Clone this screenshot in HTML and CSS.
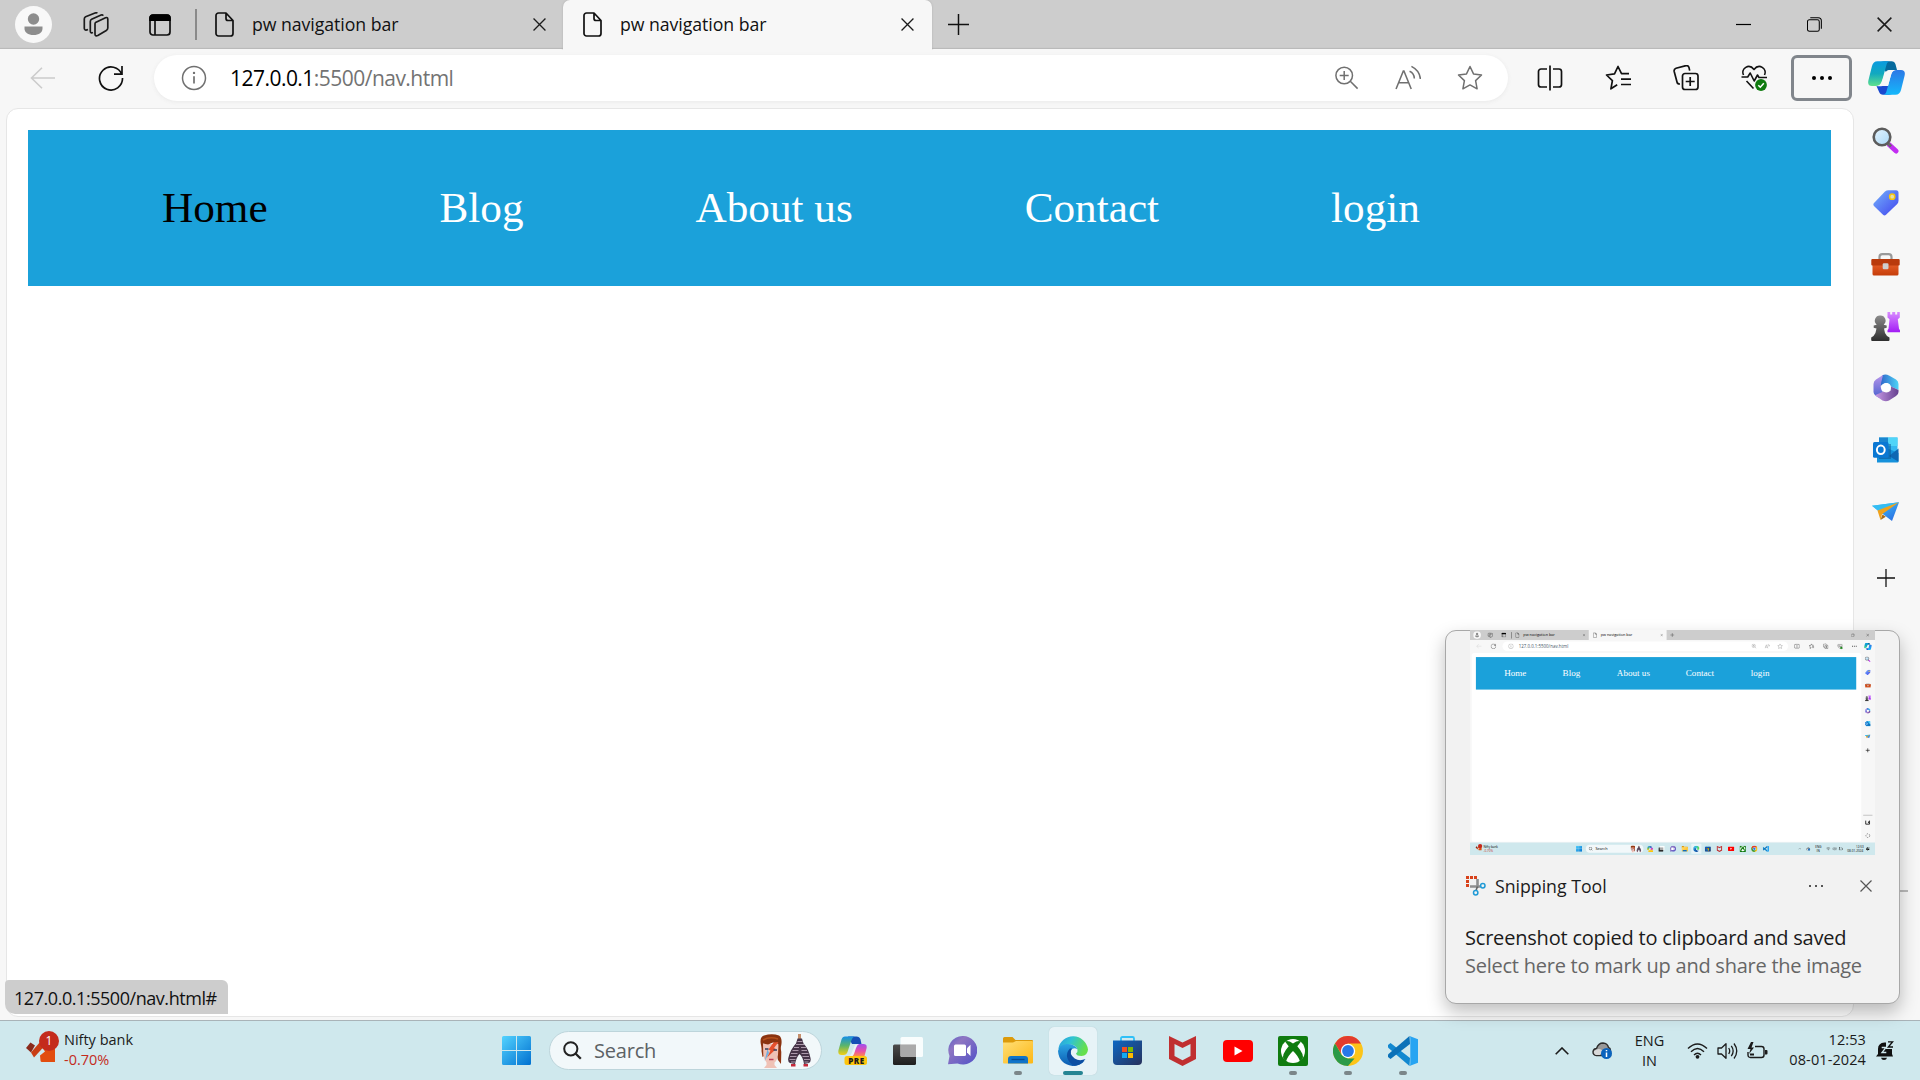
FILE: index.html
```html
<!DOCTYPE html>
<html lang="en">
<head>
<meta charset="utf-8">
<title>pw navigation bar</title>
<link rel="stylesheet" href="styles.css">
</head>
<body>
<svg class="sprite" width="0" height="0" aria-hidden="true">
  <defs>
    <linearGradient id="g-cop1" x1="0" y1="0" x2="0" y2="1"><stop offset="0" stop-color="#0a9be0"/><stop offset=".5" stop-color="#12a9bf"/><stop offset="1" stop-color="#5fe08d"/></linearGradient>
    <linearGradient id="g-cop2" x1="0" y1="0" x2="0" y2="1"><stop offset="0" stop-color="#2c78e6"/><stop offset="1" stop-color="#14b8fb"/></linearGradient>
    <linearGradient id="g-copA" x1="0" y1="0" x2="0" y2="1"><stop offset="0" stop-color="#148fe6"/><stop offset=".5" stop-color="#5cb56a"/><stop offset="1" stop-color="#f5d012"/></linearGradient>
    <linearGradient id="g-copB" x1="0" y1="0" x2="0" y2="1"><stop offset="0" stop-color="#a04fee"/><stop offset=".6" stop-color="#e94fa8"/><stop offset="1" stop-color="#ff8a4a"/></linearGradient>
    <linearGradient id="g-tag" x1="0" y1="0" x2="1" y2="1"><stop offset="0" stop-color="#74b3fb"/><stop offset="1" stop-color="#4143ee"/></linearGradient>
    <linearGradient id="g-pawn" x1="0" y1="0" x2="0" y2="1"><stop offset="0" stop-color="#8c8c8c"/><stop offset="1" stop-color="#2e2e2e"/></linearGradient>
    <linearGradient id="g-rook" x1="0" y1="0" x2="0" y2="1"><stop offset="0" stop-color="#d88cff"/><stop offset="1" stop-color="#a21bf5"/></linearGradient>
    <linearGradient id="g-box" x1="0" y1="0" x2="0" y2="1"><stop offset="0" stop-color="#e8602a"/><stop offset="1" stop-color="#c53d0a"/></linearGradient>
    <linearGradient id="g-m1" x1="0" y1="0" x2="1" y2="0"><stop offset="0" stop-color="#2f63c9"/><stop offset="1" stop-color="#4ed4f7"/></linearGradient>
    <linearGradient id="g-m2" x1="0" y1="0" x2="0" y2="1"><stop offset="0" stop-color="#b995ea"/><stop offset="1" stop-color="#4a62cf"/></linearGradient>
    <linearGradient id="g-m3" x1="0" y1="0" x2="1" y2="0"><stop offset="0" stop-color="#c79ae6"/><stop offset="1" stop-color="#66408f"/></linearGradient>
    <linearGradient id="g-win" x1="0" y1="0" x2="1" y2="1"><stop offset="0" stop-color="#54d3ff"/><stop offset="1" stop-color="#0070d0"/></linearGradient>
    <linearGradient id="g-tv" x1="0" y1="0" x2="0" y2="1"><stop offset="0" stop-color="#4b4b4b"/><stop offset="1" stop-color="#1e1e1e"/></linearGradient>
    <linearGradient id="g-chat" x1="0" y1="0" x2="1" y2="1"><stop offset="0" stop-color="#5b5fc7"/><stop offset=".3" stop-color="#8e75c2"/><stop offset="1" stop-color="#5050c8"/></linearGradient>
    <linearGradient id="g-fold" x1="0" y1="0" x2="1" y2="1"><stop offset="0" stop-color="#ffdf78"/><stop offset="1" stop-color="#fdb714"/></linearGradient>
    <linearGradient id="g-e1" x1="0" y1="0" x2="1" y2=".35"><stop offset="0" stop-color="#2a9be0"/><stop offset=".45" stop-color="#2fc3d3"/><stop offset="1" stop-color="#65e04c"/></linearGradient>
    <linearGradient id="g-e2" x1="0" y1="0" x2="0" y2="1"><stop offset="0" stop-color="#2ba5e4"/><stop offset="1" stop-color="#0b59b0"/></linearGradient>
    <linearGradient id="g-store" x1="0" y1="0" x2="1" y2="1"><stop offset="0" stop-color="#0d68c4"/><stop offset="1" stop-color="#27315c"/></linearGradient>
    <linearGradient id="g-plane" x1="0" y1="0" x2="1" y2="1"><stop offset="0" stop-color="#43d0fb"/><stop offset="1" stop-color="#2763e0"/></linearGradient>
    <linearGradient id="g-glass" x1="0" y1="0" x2="1" y2="1"><stop offset="0" stop-color="#e4f3fd"/><stop offset="1" stop-color="#a9d8f7"/></linearGradient>
  </defs>

  <symbol id="i-profile" viewBox="0 0 37 37"><circle cx="18.500" cy="18.500" r="18.500" fill="#f8f8f8"/><circle cx="18.500" cy="13" r="5.700" fill="#8d8d8d"/><path d="M9.500 20.500h18v2c0 4-3.500 6.500-9 6.500s-9-2.500-9-6.500z" fill="#8d8d8d"/></symbol>
  <symbol id="i-workspaces" viewBox="0 0 26 26"><g fill="none" stroke="#1b1b1b" stroke-width="1.700" stroke-linejoin="round"><path d="M12.500 10.600 22.500 5.700q2.200-.7 2.300 1.500V16q0 1.600-1.500 2.500l-8.500 5q-2.600 1.200-2.800-1.200V12q0-1 .5-1.400z"/><path d="M10 20.500q-2.500 1.200-2.700-1.200V9.500q0-1.600 1.300-2.300l9.500-4.200q1.600-.4 2 .8"/><path d="M5 17.500q-3.400 1.500-3.700-1.200V7q0-1.600 1.300-2.300L12 1q1.800-.5 2.200.4"/></g></symbol>
  <symbol id="i-tabs" viewBox="0 0 22 22"><path d="M4 1h14a3 3 0 0 1 3 3v14a3 3 0 0 1-3 3H4a3 3 0 0 1-3-3V4a3 3 0 0 1 3-3zM6 6v15" fill="none" stroke="#111" stroke-width="1.700"/><path d="M.2 7V4A4 4 0 0 1 4 .2h14A4 4 0 0 1 21.800 4v3z" fill="#000"/></symbol>
  <symbol id="i-file" viewBox="0 0 19 25"><path d="M3.500 1H11l7 7.500V21.500a2.500 2.500 0 0 1-2.500 2.500h-12A2.500 2.500 0 0 1 1 21.500V3.500A2.500 2.500 0 0 1 3.500 1zM11 1v5.500a2 2 0 0 0 2 2h5" fill="none" stroke="#111" stroke-width="1.700" stroke-linejoin="round"/></symbol>
  <symbol id="i-x" viewBox="0 0 12 12"><path d="m.5.5 11 11m0-11-11 11" fill="none" stroke="currentColor" stroke-width="1.200"/></symbol>
  <symbol id="i-plus" viewBox="0 0 20 20"><path d="M10 0v20M0 10h20" stroke="#111" stroke-width="1.400"/></symbol>
  <symbol id="i-min" viewBox="0 0 15 15"><path d="M0 7.500h15" stroke="#000" stroke-width="1.200"/></symbol>
  <symbol id="i-restore" viewBox="0 0 16 16"><path d="M2.500 3h8.600a2 2 0 0 1 2 2v8.200a2 2 0 0 1-2 2H2.500a2 2 0 0 1-2-2V5a2 2 0 0 1 2-2zM3.500.7h8.500q3.300 0 3.300 3.300v8.500" fill="none" stroke="#000" stroke-width="1.100"/></symbol>
  <symbol id="i-back" viewBox="0 0 26 22"><path d="M25 11H1M12 .8 1.500 11 12 21.200" fill="none" stroke="#ccc" stroke-width="1.600"/></symbol>
  <symbol id="i-reload" viewBox="0 0 26 26"><path d="M23.800 9.500A11.500 11.500 0 1 0 24.500 13M24 1v8.200h-8" fill="none" stroke="#111" stroke-width="1.700"/></symbol>
  <symbol id="i-info" viewBox="0 0 26 26"><circle cx="13" cy="13" r="11.500" fill="none" stroke="#707070" stroke-width="1.500"/><path d="M13 11.300v7.200" stroke="#707070" stroke-width="1.700"/><circle cx="13" cy="7.900" r="1.200" fill="#707070"/></symbol>
  <symbol id="i-zoomin" viewBox="0 0 24 24"><path d="M17.500 9.500a8.300 8.300 0 1 1-16.600 0 8.300 8.300 0 0 1 16.600 0zM15.300 15.300l7.300 7.300M9.200 5v9M4.700 9.500h9" fill="none" stroke="#707070" stroke-width="1.500"/></symbol>
  <symbol id="i-read" viewBox="0 0 25 24"><path d="m1 22.500 7-17.300h.6l7 17.300M3.500 16.500h9.700M14 5.500q4.500 2 4.600 7M15.800.8q8 4 8.600 12.200" fill="none" stroke="#707070" stroke-width="1.500"/></symbol>
  <symbol id="i-star" viewBox="0 0 26 26"><path d="m13 1.500 3.500 7.400 8 1.100-5.900 5.600 1.500 8.200-7.100-3.900-7.100 3.900 1.500-8.200L1.500 10l8-1.100z" fill="none" stroke="#707070" stroke-width="1.500" stroke-linejoin="round"/></symbol>
  <symbol id="i-split" viewBox="0 0 26 26"><path d="M10 4H4a2.500 2.500 0 0 0-2.500 2.500v13A2.500 2.500 0 0 0 4 22h6M16 4h6a2.500 2.500 0 0 1 2.500 2.500v13A2.500 2.500 0 0 1 22 22h-6M13 .5v25" fill="none" stroke="#111" stroke-width="1.700"/></symbol>
  <symbol id="i-favs" viewBox="0 0 26 26"><path d="M24 8.700H16.500L13 1.500 9.500 8.900l-8 1.100 5.900 5.600-1.500 8.200 6.300-4M16 14.200h10M16 19.500h10" fill="none" stroke="#111" stroke-width="1.700" stroke-linejoin="round"/></symbol>
  <symbol id="i-collect" viewBox="0 0 26 26"><path d="M12 8.500h10.500a2.500 2.500 0 0 1 2.500 2.500v11a2.500 2.500 0 0 1-2.500 2.500H12A2.500 2.500 0 0 1 9.500 22V11A2.500 2.500 0 0 1 12 8.500zM17.200 12v9M12.700 16.500h9M7 19q-2.600.2-3-2L1.200 6.500Q.7 4 3 3.200l10-2.600q2.300-.4 3 2l.7 3" fill="none" stroke="#111" stroke-width="1.700"/></symbol>
  <symbol id="i-health" viewBox="0 0 26 26"><path d="M2.500 10C-.5 3.500 8-2 13 4.500 18-2 26.500 3.500 23.500 10M.5 12h6.200l2.500-4 4 8 3.300-6 1.500 2.500H26M5.500 16l7 7.500" fill="none" stroke="#111" stroke-width="1.600" stroke-linejoin="round"/><circle cx="20" cy="20" r="5.900" fill="#0f7b0f"/><path d="m17.300 20.200 2 2 3.500-4" fill="none" stroke="#fff" stroke-width="1.500"/></symbol>
  <symbol id="i-copilot" viewBox="0 0 37 34"><path d="M12 2Q13 .3 16 .3h7.500q3 0 4 3L29 9h-7.500q-2 0-3 3z" fill="#066a9d"/><path d="M25 32q-1 1.700-4 1.700h-6q-3 0-4-3L8.500 25H14q3 0 4-3z" fill="#1a49cf"/><path d="M9.500.3H22q-2.700.2-3.500 3.500L14 20q-1.300 5-6 5H4q-5 0-3.500-6L4 5Q5.200.3 9.500.3z" fill="url(#g-cop1)"/><path d="M27.500 33.700H15q2.700-.2 3.500-3.500L23 14q1.300-5 6-5h4q5 0 3.500 6L33 29q-1.200 4.700-5.500 4.700z" fill="url(#g-cop2)"/><path d="M21.500 9H27q-3 .5-4 5l-3 11h-5.500q-3 .5-6 0 4 0 5.500-5l3-7.500q1-3.500 4.500-3.500z" fill="#f7f7f7"/></symbol>
  <symbol id="i-search3d" viewBox="0 0 27 27"><path d="m17.500 18 6.500 6" stroke="#c22ef2" stroke-width="5" stroke-linecap="round"/><path d="m15 15.500 4 4" stroke="#6a6a6a" stroke-width="3"/><circle cx="10" cy="10" r="8.300" fill="url(#g-glass)" stroke="#5c5c5c" stroke-width="2.600"/></symbol>
  <symbol id="i-tag" viewBox="0 0 26 26"><path d="M12 1.600Q13.500.2 15.500.2H23q2.500 0 2.500 2.500v8q0 2-1.500 3.500L13 24.800q-1.500 1.200-3 0L1 16q-1.300-1.500 0-3z" fill="url(#g-tag)"/><circle cx="19.200" cy="6.700" r="2.600" fill="#e3dfae" stroke="#f8c60e" stroke-width="1.500"/></symbol>
  <symbol id="i-toolbox" viewBox="0 0 29 23"><path d="M8.500 7V4q0-2.800 2.800-2.800h6.400q2.800 0 2.800 2.800v3" fill="none" stroke="#999" stroke-width="2.200"/><rect x="1.500" y="10" width="26" height="12.500" rx="1.500" fill="url(#g-box)"/><rect x=".3" y="6" width="28.400" height="6.500" rx="1" fill="#b93a0c"/><rect x="11.700" y="10.300" width="5.800" height="6" rx="1.200" fill="#cfcfcf"/></symbol>
  <symbol id="i-chess" viewBox="0 0 29 30"><path d="M16.500 1h2.700v2.400h2V1h3v2.400h2V1h2.600v5.500l-2 1.800 1.200 9.500 1 1.500v2H16.500v-2l1-1.500 1-9.500-2-1.800z" fill="url(#g-rook)"/><path d="M9.200 4.500a5.200 5.200 0 0 1 3.500 9.200l3 .8v2.300l-2.700.8q.3 4.400 3 7.400l2.500 1.500V29q0 1-1 1H1.200q-1 0-1-1v-2.500L2.500 25q2.600-3 3-7.400l-2.800-.8v-2.300l3-.8A5.200 5.200 0 0 1 9.200 4.500z" fill="url(#g-pawn)"/></symbol>
  <symbol id="i-m365" viewBox="0 0 26 28"><path d="M9 1.500Q12.500-.5 16 1.500l7 4Q25.500 7 25.500 10v6L18 12.500Q17 9 13 9L7 12z" fill="url(#g-m1)"/><path d="M10 1 7.700 10.500q-.2 5.500 2.300 7.500L6.500 24 3 22Q.5 20.500.5 18v-8Q.5 7 3 5.500z" fill="url(#g-m2)"/><path d="M2 21.200 10.500 17.500q3.500 2.200 7-.7.700-2 .5-4.300l7.500 3.500v2q0 2.800-2.500 4l-7 4.500Q13 28 9.500 26.500z" fill="url(#g-m3)"/><circle cx="13" cy="13.500" r="4.500" fill="#fff"/></symbol>
  <symbol id="i-outlook" viewBox="0 0 26 26"><path d="M6 .5h18.500V15H6z" fill="#35b8f1"/><path d="M6 .5h9V10H6z" fill="#1b85cf"/><path d="M15 .5h9.500V9H15z" fill="#50d4f8"/><path d="M4 12h12l9.500 4v8.500q0 1-1 1H4z" fill="#1691db"/><path d="m16 19 9.500-7.500v13.300z" fill="#0f67b3"/><rect x="6" y="7" width="12" height="15" fill="#0a4f8b" opacity=".5"/><rect x="0" y="5" width="15.500" height="15.800" rx="1.500" fill="#0b78d3"/><ellipse cx="7.800" cy="12.800" rx="3.900" ry="4.200" fill="none" stroke="#fff" stroke-width="2"/></symbol>
  <symbol id="i-plane" viewBox="0 0 27 20"><path d="M0 3.800 27 .3 20 19z" fill="url(#g-plane)"/><path d="M0 3.800 27 .3 7.500 10z" fill="#34bdf3"/><path d="M5.500 8.500 27 .3 10 12.300 8.500 18z" fill="#f1a21b"/><path d="m8.500 18 2-5.500 3.300 2.300z" fill="#a66a1a"/></symbol>

  <symbol id="i-stock" viewBox="0 0 34 28"><path d="m1 14 4.500-5.500 4.500 3L6 18.500z" fill="#8a2a1b"/><path d="m6 18.500 9-10.500 4.500 4L9 23.500z" fill="#c93d14"/><path d="M14 9h16v19H17q-1.500 0-1.500-1.500l-.5-5 5-4z" fill="#e24d0e"/></symbol>
  <symbol id="i-start" viewBox="0 0 29 29"><path d="M1.500 0H14v14H0V1.500Q0 0 1.500 0zM15 0h12.500Q29 0 29 1.500V14H15zM0 15h14v14H1.500Q0 29 0 27.500zM15 15h14v12.500q0 1.500-1.500 1.500H15z" fill="url(#g-win)"/></symbol>
  <symbol id="i-mag" viewBox="0 0 19 19"><circle cx="7.800" cy="7.800" r="6.600" fill="none" stroke="#222" stroke-width="2"/><path d="m12.500 12.500 5.300 5.300" stroke="#222" stroke-width="2.300"/></symbol>
  <symbol id="i-face" viewBox="0 0 22 34"><path d="M2 10h18l1.300 8-.3 12-3-4-1-4H4l-1.500 1-1-6z" fill="#8f3512"/><path d="M3 10h15.500l-.5 11q-1 6-3.500 7.500V31l2.500 3H4l2.500-3v-2.500Q4 26 3.300 21z" fill="#efc2b6"/><path d="M.8 10Q-.5 3 4 1.500 12-1 19 1.500q3.500 2.500 2.300 9.500L20 16l-1.500-6-5.500-1.500-5 2-5-1-1 6z" fill="#8a3310"/><path d="M3 6q7-4 15-1" stroke="#b5501c" stroke-width="1.500" fill="none"/><path d="m13.500 8.500 5-.5-4.500 6 2 1-9 8.500 3.500-7-2-1z" fill="#e6502d"/><path d="m7.500 15-2.800 12 4.300-8z" fill="#71aee0"/><path d="M5 15h3.500M13.500 16H17" stroke="#35405e" stroke-width="1.500"/><path d="M9 25.500h4.500" stroke="#c0415a" stroke-width="1.500"/></symbol>
  <symbol id="i-pants" viewBox="0 0 23 33"><path d="M10 0h3v6h-3z" fill="#c58f6c"/><path d="M9.500 4.500h4.500l1.500 5q5 5 7 14.500.8 4-1.500 5l-5 1q-1-7-4.500-10-3 3-4.500 10l-5-1Q-.5 28 .3 24 2.500 15 8 9.500z" fill="#453347"/><path d="M9.500 7.500h5M8 10.500h8M6 13.500h5m2 0h5M4.500 16.500h6m3 0h5.500M3 19.500h6.500m4 0h7M2 22.500h6.500m6 0H21M1.500 25.500h6m8.500 0h6M3 28h4m9.500 0h4" stroke="#c5b3c4" stroke-width=".8"/><path d="M3 30h4.500v2.500H3zM15.500 30H20v2.500h-4.500z" fill="#c5283a"/></symbol>
  <symbol id="i-copcolor" viewBox="0 0 29 29"><path d="M10 .5h8.500q3 0 4 3L23.500 8H14z" fill="#164fb5"/><path d="M7 .5h9.500q-2 .5-3 3.500L9.500 16q-1 3-4 3h-2Q-.5 19 .5 14L3.500 3.500Q4.500.5 7 .5z" fill="url(#g-copA)"/><path d="M21 20H12q2-.5 3-3.500L17 11q1-3 4-3h4.500q4 0 3 4.500L26.500 20z" fill="url(#g-copB)"/><path d="m17 9-4 9.500q-1 2-4 2h4q2 0 3-2.500l2-6q1-3 3-4-3 0-4 1z" fill="#eaf4f6"/><rect x="6.500" y="20" width="22.500" height="9" rx="2.500" fill="#fdc50c"/></symbol>
  <symbol id="i-taskview" viewBox="0 0 30 28"><rect x="0" y="7.500" width="23" height="20.500" rx="1.500" fill="url(#g-tv)"/><rect x="7.500" y="0" width="22.500" height="20" rx="1.500" fill="#fff" opacity=".88"/><path d="M7.500 7.500H23V20H9q-1.500 0-1.500-1.500z" fill="#aaa"/></symbol>
  <symbol id="i-chat" viewBox="0 0 29 29"><path d="M14.500 0a14.300 14.300 0 1 1-5 27.500L0 28.300 1.500 20A14.300 14.300 0 0 1 14.500 0z" fill="url(#g-chat)"/><rect x="6" y="8.500" width="12" height="11.500" rx="1.500" fill="#fff"/><path d="m19 12.300 3.500-3.500V20L19 16.500z" fill="#fff"/></symbol>
  <symbol id="i-folder" viewBox="0 0 30 27"><path d="M1.500 0h8l3 3H29q1 0 1 1v8H0V1.500Q0 0 1.500 0z" fill="#dc9a0b"/><path d="M0 5.500h10L13 4h16q1 0 1 1v20.500q0 1-1 1H1q-1 0-1-1z" fill="url(#g-fold)"/><path d="M5 26.500V22q0-3 3-3h14q3 0 3 3v4.500z" fill="#1074c9"/><path d="M8.500 22.500h13" stroke="#0a4b91" stroke-width="1.300"/></symbol>
  <symbol id="i-edge" viewBox="0 0 30 30"><path d="M.3 13A15 15 0 0 1 30 13.500q-.5 6.200-6.500 6.500-5 0-5.500-2.500 2-1.500 1.500-4-1.500-4.500-7-5Q4 9 .3 13z" fill="url(#g-e1)"/><path d="M0 15Q1 8.500 9 8q8.500 0 10.500 5.500-2.500-2-5.500-.5-5 3-2.500 9 3 6 11 4.500l4-1.500Q22 30 14.500 30 1 28 0 15z" fill="url(#g-e2)"/><path d="M12 12.500Q7.500 17 9.500 22.500q2 5 7 7.300 7-.8 11-6.800-6 2.500-10.800-.5Q10.500 18 14 12.500z" fill="#0c4ea2"/></symbol>
  <symbol id="i-store" viewBox="0 0 29 29"><path d="M8 6V2.500Q8 1 9.500 1h10Q21 1 21 2.500V6" fill="none" stroke="#2fc0f7" stroke-width="1.800"/><path d="M0 4.500h29V25q0 4-4 4H4q-4 0-4-4z" fill="url(#g-store)"/><path d="M9 11h5v5H9z" fill="#f25022"/><path d="M15 11h5v5h-5z" fill="#7fba00"/><path d="M9 17h5v5H9z" fill="#13a9f1"/><path d="M15 17h5v5h-5z" fill="#ffb900"/></symbol>
  <symbol id="i-mcafee" viewBox="0 0 27 30"><path d="m0 0 13.500 6.500L27 0v23l-13.500 7L0 23zm5.500 8v12l8 4.200 8-4.200V8l-8 4z" fill="#c02f30" fill-rule="evenodd"/></symbol>
  <symbol id="i-youtube" viewBox="0 0 30 22"><rect width="30" height="22" rx="4" fill="#f00"/><path d="m11.500 6.500 8 4.500-8 4.500z" fill="#fff"/></symbol>
  <symbol id="i-xbox" viewBox="0 0 30 30"><rect width="30" height="30" rx="2" fill="#107c10"/><circle cx="15" cy="15" r="12" fill="#fff"/><path d="M7 5.500q3-1.500 8 2 5-3.500 8-2l-3.700 4.700q7.200 8.300 5.200 12.800L22 25.500q-2-6-7-10.500-5 4.500-7 10.500L5.500 23q-2-4.500 5.200-12.800z" fill="#107c10"/></symbol>
  <symbol id="i-chrome" viewBox="0 0 30 30"><circle cx="15" cy="15" r="15" fill="#fcc419"/><path d="M2 7.500A15 15 0 0 1 28 7.500H15L9 19z" fill="#e33b2e"/><path d="M2 7.500 8.500 18.700 15 22.500h6.500L15 30A15 15 0 0 1 2 7.500z" fill="#2b9a48"/><circle cx="15" cy="15" r="7.200" fill="#fff"/><circle cx="15" cy="15" r="5.900" fill="#2878e8"/></symbol>
  <symbol id="i-vscode" viewBox="0 0 30 30"><path d="m0 9 2.500-2 19.500 15-.5 8L.5 12q-1-1.500-.5-3z" fill="#1288d0"/><path d="m0 21 2.500 2L22 8l-.5-8L.5 18q-1 1.500-.5 3z" fill="#0b71b8"/><path d="M21.500 0 30 3.300v23.400L21.500 30q1-1 .8-3V3q.2-2-.8-3z" fill="#27a4f2"/></symbol>

  <symbol id="i-chev" viewBox="0 0 14 8"><path d="M.7 7.300 7 1l6.300 6.300" fill="none" stroke="#1b1b1b" stroke-width="1.600"/></symbol>
  <symbol id="i-cloud" viewBox="0 0 20 17"><path d="M4.500 13.500Q.8 13 1 9.700q.5-3 3.500-3.200Q6.500 1 11 1q4.500.3 5.500 4.500 2 .5 2 3v5z" fill="#989898" stroke="#2d2d2d" stroke-width="1.400"/><path d="M2 9q5-4 9 0l-3 4H4q-2.500-1-2-4z" fill="#d8d8d8"/><circle cx="14.500" cy="11.500" r="5.500" fill="#0a63bd"/><path d="M14.500 10.500V15M14.500 8v1.300" stroke="#fff" stroke-width="1.500"/></symbol>
  <symbol id="i-wifi" viewBox="0 0 21 16"><path d="M1 5.500q9.500-9 19 0M4 8.800q6.500-6.500 13 0M7 12q3.500-3.500 7 0" fill="none" stroke="#1b1b1b" stroke-width="1.400"/><circle cx="10.500" cy="13.800" r="1.900" fill="#1b1b1b"/></symbol>
  <symbol id="i-vol" viewBox="0 0 21 18"><path d="M1 6h3.500L9 1.700v14.600L4.500 12H1zM11.700 6q2 3 0 6M14.300 3.800q3.700 5.200 0 10.400M17 1.500q5.500 7.500 0 15" fill="none" stroke="#1b1b1b" stroke-width="1.300" stroke-linejoin="round"/></symbol>
  <symbol id="i-batt" viewBox="0 0 21 17"><path d="M8 4.500h6.500Q17 4.500 17 7v6q0 2.500-2.500 2.500H3.500Q1 15.500 1 13v-3" fill="none" stroke="#1b1b1b" stroke-width="1.400"/><path d="M18 8h1.500q1 0 1 1v2.500q0 1-1 1H18z" fill="#1b1b1b"/><path d="M4 0 .5 7h3L2 12l5-6.500H4.500L6.500 0zM3 13.500v-2h4v2z" fill="#1b1b1b"/></symbol>
  <symbol id="i-bell" viewBox="0 0 18 20"><path d="M2 8q0-6 6.500-6.500H10V8h6v5l1 2.500H0L2 13zM5 16.700h6q-.5 2.300-3 2.300t-3-2.300z" fill="#111"/><path d="M12 .8h4.700L12.300 6H17" fill="none" stroke="#cfe8ed" stroke-width="2.600"/><path d="M12 .9h4.500L12.300 6H17" fill="none" stroke="#111" stroke-width="1.400"/><path d="M5.700 6.500H10l-4 5h4.300" fill="none" stroke="#cfe8ed" stroke-width="1.300"/></symbol>
  <symbol id="i-snip" viewBox="0 0 20 20"><path d="M0 0h3v3H0zM4 0h3v3H4zM8 0h3v3H8zM0 4h3v3H0zM0 8h3v3H0z" fill="#d8421a"/><path d="M11.500 3v9M4 10.500h10" stroke="#8f8f8f" stroke-width="2.600"/><path d="M11.500 10.500 10 14.500M14 10.500h1" stroke="#666" stroke-width="1.600"/><circle cx="16.800" cy="9.800" r="2.200" fill="none" stroke="#1f9ad6" stroke-width="1.500"/><circle cx="9.700" cy="16.800" r="2.200" fill="none" stroke="#1f9ad6" stroke-width="1.500"/></symbol>
</svg>

<div class="browser">
  <header class="tabstrip">
    <svg class="profile"><use href="#i-profile"/></svg>
    <svg class="workspaces"><use href="#i-workspaces"/></svg>
    <svg class="tabs-menu"><use href="#i-tabs"/></svg>
    <span class="divider"></span>
    <div class="tab">
      <svg class="file"><use href="#i-file"/></svg>
      <span class="tab-title">pw navigation bar</span>
      <svg class="tab-close"><use href="#i-x"/></svg>
    </div>
    <div class="tab tab-active">
      <svg class="file"><use href="#i-file"/></svg>
      <span class="tab-title">pw navigation bar</span>
      <svg class="tab-close"><use href="#i-x"/></svg>
    </div>
    <svg class="new-tab"><use href="#i-plus"/></svg>
    <div class="controls">
      <span><svg class="ctl"><use href="#i-min"/></svg></span>
      <span><svg class="ctl"><use href="#i-restore"/></svg></span>
      <span><svg class="ctl"><use href="#i-x"/></svg></span>
    </div>
  </header>

  <div class="toolbar">
    <svg class="back"><use href="#i-back"/></svg>
    <svg class="tool reload"><use href="#i-reload"/></svg>
    <div class="address">
      <svg class="tool"><use href="#i-info"/></svg>
      <span class="url"><b>127.0.0.1</b>:5500/nav.html</span>
      <div class="address-actions">
        <svg class="zoomin"><use href="#i-zoomin"/></svg>
        <svg class="tool"><use href="#i-read"/></svg>
        <svg class="tool"><use href="#i-star"/></svg>
      </div>
    </div>
    <div class="tools">
      <svg class="tool"><use href="#i-split"/></svg>
      <svg class="tool"><use href="#i-favs"/></svg>
      <svg class="tool"><use href="#i-collect"/></svg>
      <svg class="tool"><use href="#i-health"/></svg>
    </div>
    <div class="more"><i></i><i></i><i></i></div>
    <svg class="copilot"><use href="#i-copilot"/></svg>
  </div>

  <div class="content">
    <main class="page">
      <nav class="navbar">
        <a class="current">Home</a>
        <a>Blog</a>
        <a>About us</a>
        <a>Contact</a>
        <a>login</a>
      </nav>
      <div class="status">127.0.0.1:5500/nav.html#</div>
    </main>
    <aside class="sidebar">
      <span class="side"><svg width="27" height="27"><use href="#i-search3d"/></svg></span>
      <span class="side"><svg width="26" height="26"><use href="#i-tag"/></svg></span>
      <span class="side"><svg width="29" height="23"><use href="#i-toolbox"/></svg></span>
      <span class="side"><svg width="29" height="30"><use href="#i-chess"/></svg></span>
      <span class="side"><svg width="26" height="28"><use href="#i-m365"/></svg></span>
      <span class="side"><svg width="26" height="26"><use href="#i-outlook"/></svg></span>
      <span class="side"><svg width="27" height="20"><use href="#i-plane"/></svg></span>
      <span class="side side-add"><svg width="18" height="18"><use href="#i-plus"/></svg></span>
      <span class="side-line"></span>
    </aside>
  </div>
</div>

<footer class="taskbar">
  <div class="widget">
    <div class="widget-icon"><svg width="34" height="28"><use href="#i-stock"/></svg><span class="badge">1</span></div>
    <div class="widget-text"><span>Nifty bank</span><span class="down">-0.70%</span></div>
  </div>
  <div class="apps">
    <span class="app start"><svg width="29" height="29"><use href="#i-start"/></svg></span>
    <div class="search">
      <svg width="19" height="19"><use href="#i-mag"/></svg>
      <span>Search</span>
      <svg class="face" width="22" height="34"><use href="#i-face"/></svg>
      <svg width="23" height="33"><use href="#i-pants"/></svg>
    </div>
    <span class="app"><svg width="29" height="29"><use href="#i-copcolor"/></svg><span class="pre">PRE</span></span>
    <span class="app"><svg width="30" height="28"><use href="#i-taskview"/></svg></span>
    <span class="app"><svg width="29" height="29"><use href="#i-chat"/></svg></span>
    <span class="app running"><svg width="30" height="27"><use href="#i-folder"/></svg></span>
    <span class="app running focused"><svg width="30" height="30"><use href="#i-edge"/></svg></span>
    <span class="app"><svg width="29" height="29"><use href="#i-store"/></svg></span>
    <span class="app"><svg width="27" height="30"><use href="#i-mcafee"/></svg></span>
    <span class="app"><svg width="30" height="22"><use href="#i-youtube"/></svg></span>
    <span class="app running"><svg width="30" height="30"><use href="#i-xbox"/></svg></span>
    <span class="app running"><svg width="30" height="30"><use href="#i-chrome"/></svg></span>
    <span class="app running"><svg width="30" height="30"><use href="#i-vscode"/></svg></span>
  </div>
  <div class="tray">
    <svg width="14" height="8"><use href="#i-chev"/></svg>
    <svg class="cloud" width="20" height="17"><use href="#i-cloud"/></svg>
    <div class="lang"><span>ENG</span><span>IN</span></div>
    <svg width="21" height="16"><use href="#i-wifi"/></svg>
    <svg class="vol" width="21" height="18"><use href="#i-vol"/></svg>
    <svg class="batt" width="21" height="17"><use href="#i-batt"/></svg>
    <div class="clock"><span>12:53</span><span>08-01-2024</span></div>
    <svg class="bell" width="18" height="20"><use href="#i-bell"/></svg>
  </div>
</footer>

<section class="toast">
  <svg class="preview" viewBox="0 0 1920 1080" preserveAspectRatio="none">
    <rect width="1920" height="1080" fill="#f7f7f7"/>
    <rect width="1920" height="48" fill="#cdcdcd"/>
    <rect x="563" width="369" height="50" fill="#f7f7f7"/>
    <rect x="154" y="55" width="1354" height="46" rx="23" fill="#fff"/>
    <rect x="8" y="110" width="1847" height="906" rx="12" fill="#fff"/>
    <use href="#i-profile" x="15" y="6" width="37" height="37"/>
    <use href="#i-workspaces" x="83" y="12" width="26" height="26"/>
    <use href="#i-tabs" x="149" y="13" width="22" height="22"/>
    <rect x="195" y="10" width="3" height="31" fill="#666"/>
    <use href="#i-file" x="215" y="12" width="19" height="25"/>
    <use href="#i-file" x="583" y="12" width="19" height="25"/>
    <text x="253" y="31" class="mini-ui">pw navigation bar</text>
    <text x="620" y="31" class="mini-ui">pw navigation bar</text>
    <use href="#i-x" x="534" y="18" width="13" height="13"/>
    <use href="#i-x" x="902" y="18" width="13" height="13"/>
    <use href="#i-plus" x="949" y="14" width="20" height="20"/>
    <use href="#i-restore" x="1807" y="17" width="16" height="16"/>
    <use href="#i-x" x="1878" y="17" width="15" height="15"/>
    <use href="#i-back" x="30" y="67" width="26" height="22"/>
    <use href="#i-reload" x="98" y="65" width="26" height="26"/>
    <use href="#i-info" x="181" y="65" width="26" height="26"/>
    <text x="231" y="86" class="mini-url">127.0.0.1:5500/nav.html</text>
    <use href="#i-zoomin" x="1335" y="66" width="24" height="24"/>
    <use href="#i-read" x="1397" y="66" width="25" height="24"/>
    <use href="#i-star" x="1457" y="65" width="26" height="26"/>
    <use href="#i-split" x="1537" y="65" width="26" height="26"/>
    <use href="#i-favs" x="1606" y="65" width="26" height="26"/>
    <use href="#i-collect" x="1673" y="65" width="26" height="26"/>
    <use href="#i-health" x="1741" y="66" width="26" height="26"/>
    <path d="M1811 78h4m5 0h4m5 0h4" stroke="#111" stroke-width="4"/>
    <use href="#i-copilot" x="1868" y="62" width="37" height="34"/>
    <rect x="28" y="130" width="1803" height="156" fill="#1ba1da"/>
    <g class="mini-nav"><text x="162" y="222">Home</text><text x="439" y="222">Blog</text><text x="696" y="222">About us</text><text x="1023" y="222">Contact</text><text x="1331" y="222">login</text></g>
    <use href="#i-search3d" x="1872" y="127" width="27" height="27"/>
    <use href="#i-tag" x="1873" y="191" width="26" height="26"/>
    <use href="#i-toolbox" x="1872" y="254" width="29" height="23"/>
    <use href="#i-chess" x="1872" y="312" width="29" height="30"/>
    <use href="#i-m365" x="1873" y="374" width="26" height="28"/>
    <use href="#i-outlook" x="1873" y="437" width="26" height="26"/>
    <use href="#i-plane" x="1872" y="501" width="27" height="20"/>
    <path d="M1885.500 568v19m-9.500-9.500h19" stroke="#111" stroke-width="3"/>
    <rect x="1864" y="887" width="44" height="4" fill="#bbb"/>
    <path d="M1876 915v17h18v-17m-5 4v8" fill="none" stroke="#111" stroke-width="4"/>
    <circle cx="1886" cy="987" r="9" fill="none" stroke="#555" stroke-width="3" stroke-dasharray="6 5"/>
    <rect y="1020" width="1920" height="60" fill="#cfe8ed"/>
    <use href="#i-stock" x="25" y="1030" width="34" height="28"/>
    <circle cx="48" cy="1037" r="10" fill="#c4281c"/>
    <text x="64" y="1046" class="mini-task">Nifty bank</text>
    <text x="64" y="1065" class="mini-task mini-down">-0.70%</text>
    <use href="#i-start" x="502" y="1036" width="29" height="29"/>
    <rect x="549" y="1031" width="273" height="38" rx="19" fill="#f2f8fa"/>
    <use href="#i-mag" x="563" y="1041" width="19" height="19"/>
    <text x="595" y="1057" class="mini-ui">Search</text>
    <use href="#i-face" x="761" y="1034" width="22" height="34"/>
    <use href="#i-pants" x="789" y="1034" width="23" height="33"/>
    <use href="#i-copcolor" x="839" y="1037" width="29" height="29"/>
    <use href="#i-taskview" x="893" y="1036" width="30" height="28"/>
    <use href="#i-chat" x="948" y="1036" width="29" height="29"/>
    <use href="#i-folder" x="1003" y="1037" width="30" height="27"/>
    <rect x="1049" y="1026" width="48" height="48" rx="4" fill="#e8f4f8"/>
    <use href="#i-edge" x="1058" y="1035" width="30" height="30"/>
    <use href="#i-store" x="1113" y="1036" width="29" height="29"/>
    <use href="#i-mcafee" x="1169" y="1035" width="27" height="30"/>
    <use href="#i-youtube" x="1223" y="1039" width="30" height="22"/>
    <use href="#i-xbox" x="1278" y="1035" width="30" height="30"/>
    <use href="#i-chrome" x="1333" y="1035" width="30" height="30"/>
    <use href="#i-vscode" x="1388" y="1035" width="30" height="30"/>
    <use href="#i-chev" x="1556" y="1046" width="14" height="8"/>
    <use href="#i-cloud" x="1593" y="1043" width="20" height="17"/>
    <text x="1637" y="1046" class="mini-task">ENG</text>
    <text x="1643" y="1066" class="mini-task">IN</text>
    <use href="#i-wifi" x="1688" y="1042" width="21" height="16"/>
    <use href="#i-vol" x="1718" y="1041" width="21" height="18"/>
    <use href="#i-batt" x="1748" y="1041" width="21" height="17"/>
    <text x="1830" y="1046" class="mini-task">12:53</text>
    <text x="1789" y="1066" class="mini-task">08-01-2024</text>
    <use href="#i-bell" x="1877" y="1041" width="18" height="20"/>
  </svg>
  <div class="toast-head">
    <svg width="20" height="20"><use href="#i-snip"/></svg>
    <span class="toast-app">Snipping Tool</span>
    <span class="dots"><i></i><i></i><i></i></span>
    <svg class="toast-close" width="12" height="12"><use href="#i-x"/></svg>
  </div>
  <p class="toast-title">Screenshot copied to clipboard and saved</p>
  <p class="toast-body">Select here to mark up and share the image</p>
</section>
</body>
</html>
```
FILE: styles.css
```css
* { box-sizing: border-box; }
body {
  margin: 0;
  width: 1920px;
  height: 1080px;
  overflow: hidden;
  display: flex;
  flex-direction: column;
  background: #f7f7f7;
  color: #1b1b1b;
  font-family: "Open Sans", "Noto Sans", sans-serif;
}
svg { display: block; flex: none; }
.sprite { position: absolute; }

.browser { height: 1020px; display: flex; flex-direction: column; }

/* Tab strip */
.tabstrip {
  height: 49px;
  display: flex;
  align-items: center;
  padding-left: 15px;
  background: #cdcdcd;
  box-shadow: inset 0 -2px 1px -1px #b9b9b9;
}
.profile { width: 37px; height: 37px; }
.workspaces { width: 26px; height: 26px; margin-left: 31px; }
.tabs-menu { width: 22px; height: 22px; margin-left: 40px; }
.divider { width: 2px; height: 31px; margin-left: 24px; background: #8a8a8a; }
.tab { width: 366px; height: 49px; display: flex; align-items: center; padding: 0 17px 0 18px; }
.tab-active { width: 369px; height: 50px; margin-top: 1px; padding: 0 18px 1px 20px; background: #f7f7f7; border-radius: 7px 7px 0 0; box-shadow: 0 0 2px #aaa; clip-path: inset(0 -3px 0 -3px); }
.file { width: 19px; height: 25px; }
.tab-title { margin-left: 18px; padding-bottom: 1px; font-size: 17.700px; letter-spacing: -.05px; white-space: nowrap; color: #111; }
.tab-close { width: 13px; height: 13px; margin-left: auto; }
.new-tab { width: 21px; height: 21px; margin-left: 16px; }
.controls { display: flex; margin-left: auto; }
.controls span { width: 70.5px; display: flex; justify-content: center; }
.ctl { width: 15px; height: 15px; }

/* Toolbar */
.toolbar { height: 59px; display: flex; align-items: center; padding: 0 15px 1px 30px; background: #f7f7f7; }
.tool { width: 26px; height: 26px; }
.back { width: 26px; height: 22px; }
.reload { margin-left: 42px; }
.address {
  width: 1354px;
  height: 46px;
  margin-left: 30px;
  padding: 0 25px 0 27px;
  display: flex;
  align-items: center;
  border-radius: 23px;
  background: #fff;
  box-shadow: 0 1px 4px #e9e9e9;
}
.url { margin-left: 23px; font-size: 21px; letter-spacing: -.53px; color: #737373; }
.url b { font-weight: 400; color: #000; }
.address-actions { margin-left: auto; display: flex; align-items: center; gap: 36px; }
.zoomin { width: 24px; height: 24px; }
.tools { margin-left: 29px; display: flex; gap: 42px; }
.more {
  width: 61px;
  height: 46px;
  margin-left: 24px;
  border: 3px solid #81868c;
  border-radius: 6px;
  display: flex;
  align-items: center;
  justify-content: center;
  gap: 4px;
}
.more i { width: 4px; height: 4px; border-radius: 50%; background: #000; }
.copilot { width: 37px; height: 34px; margin-left: auto; }

/* Content row: page and sidebar */
.content { height: 912px; display: flex; padding-left: 6px; }
.page {
  position: relative;
  width: 1848px;
  height: 909px;
  padding: 21px 22px 0 21px;
  border: 1px solid #e6e6e6;
  border-radius: 12px;
  background: #fff;
}
.navbar {
  height: 156px;
  padding: 0 0 2px 134px;
  display: flex;
  align-items: center;
  gap: 172px;
  background: #1ba1da;
  color: #fff;
  font: 43.2px "Liberation Serif", serif;
}
.navbar .current { color: #000; }
.status {
  position: absolute;
  left: -2px;
  bottom: 2px;
  width: 223px;
  height: 34px;
  padding-left: 9px;
  border-radius: 4px 6px 0 10px;
  background: #cdcdcd;
  font-size: 18px;
  letter-spacing: -.45px;
  line-height: 36px;
  color: #111;
}
.sidebar { width: 66px; display: flex; flex-direction: column; align-items: center; padding: 1px 3px 0 0; }
.side { height: 62px; display: flex; align-items: center; justify-content: center; }
.side:nth-child(2) { padding-top: 2px; }
.side-add { height: 70px; }
.side-line { width: 44px; height: 2px; margin-top: 277px; background: #b9b9b9; }

/* Taskbar */
.taskbar { height: 60px; display: flex; align-items: center; border-top: 1px solid #a9b3b8; background: #cfe8ed; }
.widget { width: 480px; display: flex; padding-left: 25px; }
.widget-icon { position: relative; margin-top: 2px; }
.badge { position: absolute; left: 14px; top: -3px; width: 20px; height: 20px; border-radius: 50%; background: #c42b1c; color: #fff; font-size: 12px; line-height: 20px; text-align: center; }
.widget-text { margin: -2px 0 0 5px; display: flex; flex-direction: column; font-size: 14.500px; line-height: 20px; }
.down { color: #c42b1c; }
.apps { display: flex; align-items: center; height: 59px; }
.app { position: relative; width: 55px; height: 48px; display: flex; align-items: center; justify-content: center; }
.start { width: 73px; }
.pre { position: absolute; left: 20px; top: 29px; width: 23px; height: 10px; font-size: 8px; font-weight: 800; line-height: 9px; letter-spacing: .6px; text-align: center; }
.search {
  width: 273px;
  height: 39px;
  margin: 0 3px 0 -4px;
  padding: 0 10px 0 13px;
  display: flex;
  align-items: center;
  border: 1px solid #bdd5db;
  border-radius: 20px;
  background: #f2f8fa;
  font-size: 20px;
  letter-spacing: -.2px;
  color: #5c6265;
}
.search span { margin-left: 12px; }
.face { margin: 0 6px 0 auto; }
.running::after { content: ""; position: absolute; left: 24px; bottom: 0; width: 8px; height: 4px; border-radius: 2px; background: #7b8689; }
.focused { width: 48px; margin: 0 3px 0 4px; border-radius: 5px; background: #e7f3f7; box-shadow: 0 0 1px #a9bfc6; }
.focused::after { left: 14px; width: 20px; background: #268593; }
.tray { margin-left: auto; display: flex; align-items: center; padding-right: 26px; font-size: 14.500px; line-height: 20px; }
.cloud { margin-left: 23px; }
.lang { width: 75px; display: flex; flex-direction: column; align-items: center; }
.vol { margin-left: 9px; }
.batt { margin-left: 9px; }
.clock { width: 98px; margin-top: -2px; display: flex; flex-direction: column; align-items: flex-end; letter-spacing: .1px; }
.bell { margin-left: 10px; }

/* Notification */
.toast {
  position: absolute;
  left: 1445px;
  top: 630px;
  width: 455px;
  height: 374px;
  border: 1px solid #a8a8a8;
  border-radius: 11px;
  background: #f2f2f2;
  box-shadow: 0 8px 18px rgba(0, 0, 0, .25);
}
.preview { width: 405px; height: 225px; margin: -1px auto 0; }
.toast-head { display: flex; align-items: center; height: 22px; margin-top: 20px; padding: 0 27px 0 20px; }
.toast-app { margin-left: 9px; font-size: 17.700px; }
.dots { display: flex; gap: 4px; margin-left: auto; }
.dots i { width: 2px; height: 2px; background: #555; }
.toast-close { margin-left: 37px; color: #555; }
.toast-title, .toast-body { margin: 0; padding-left: 19px; font-size: 20px; line-height: 28px; white-space: nowrap; }
.toast-title { margin-top: 27px; letter-spacing: -.2px; }
.toast-body { color: #666; letter-spacing: -.24px; }
.mini-ui { font-size: 18px; }
.mini-url { font-size: 21px; fill: #456; }
.mini-nav { font: 43.2px "Liberation Serif", serif; fill: #fff; }
.mini-task { font-size: 14.500px; }
.mini-down { fill: #c42b1c; }
```
